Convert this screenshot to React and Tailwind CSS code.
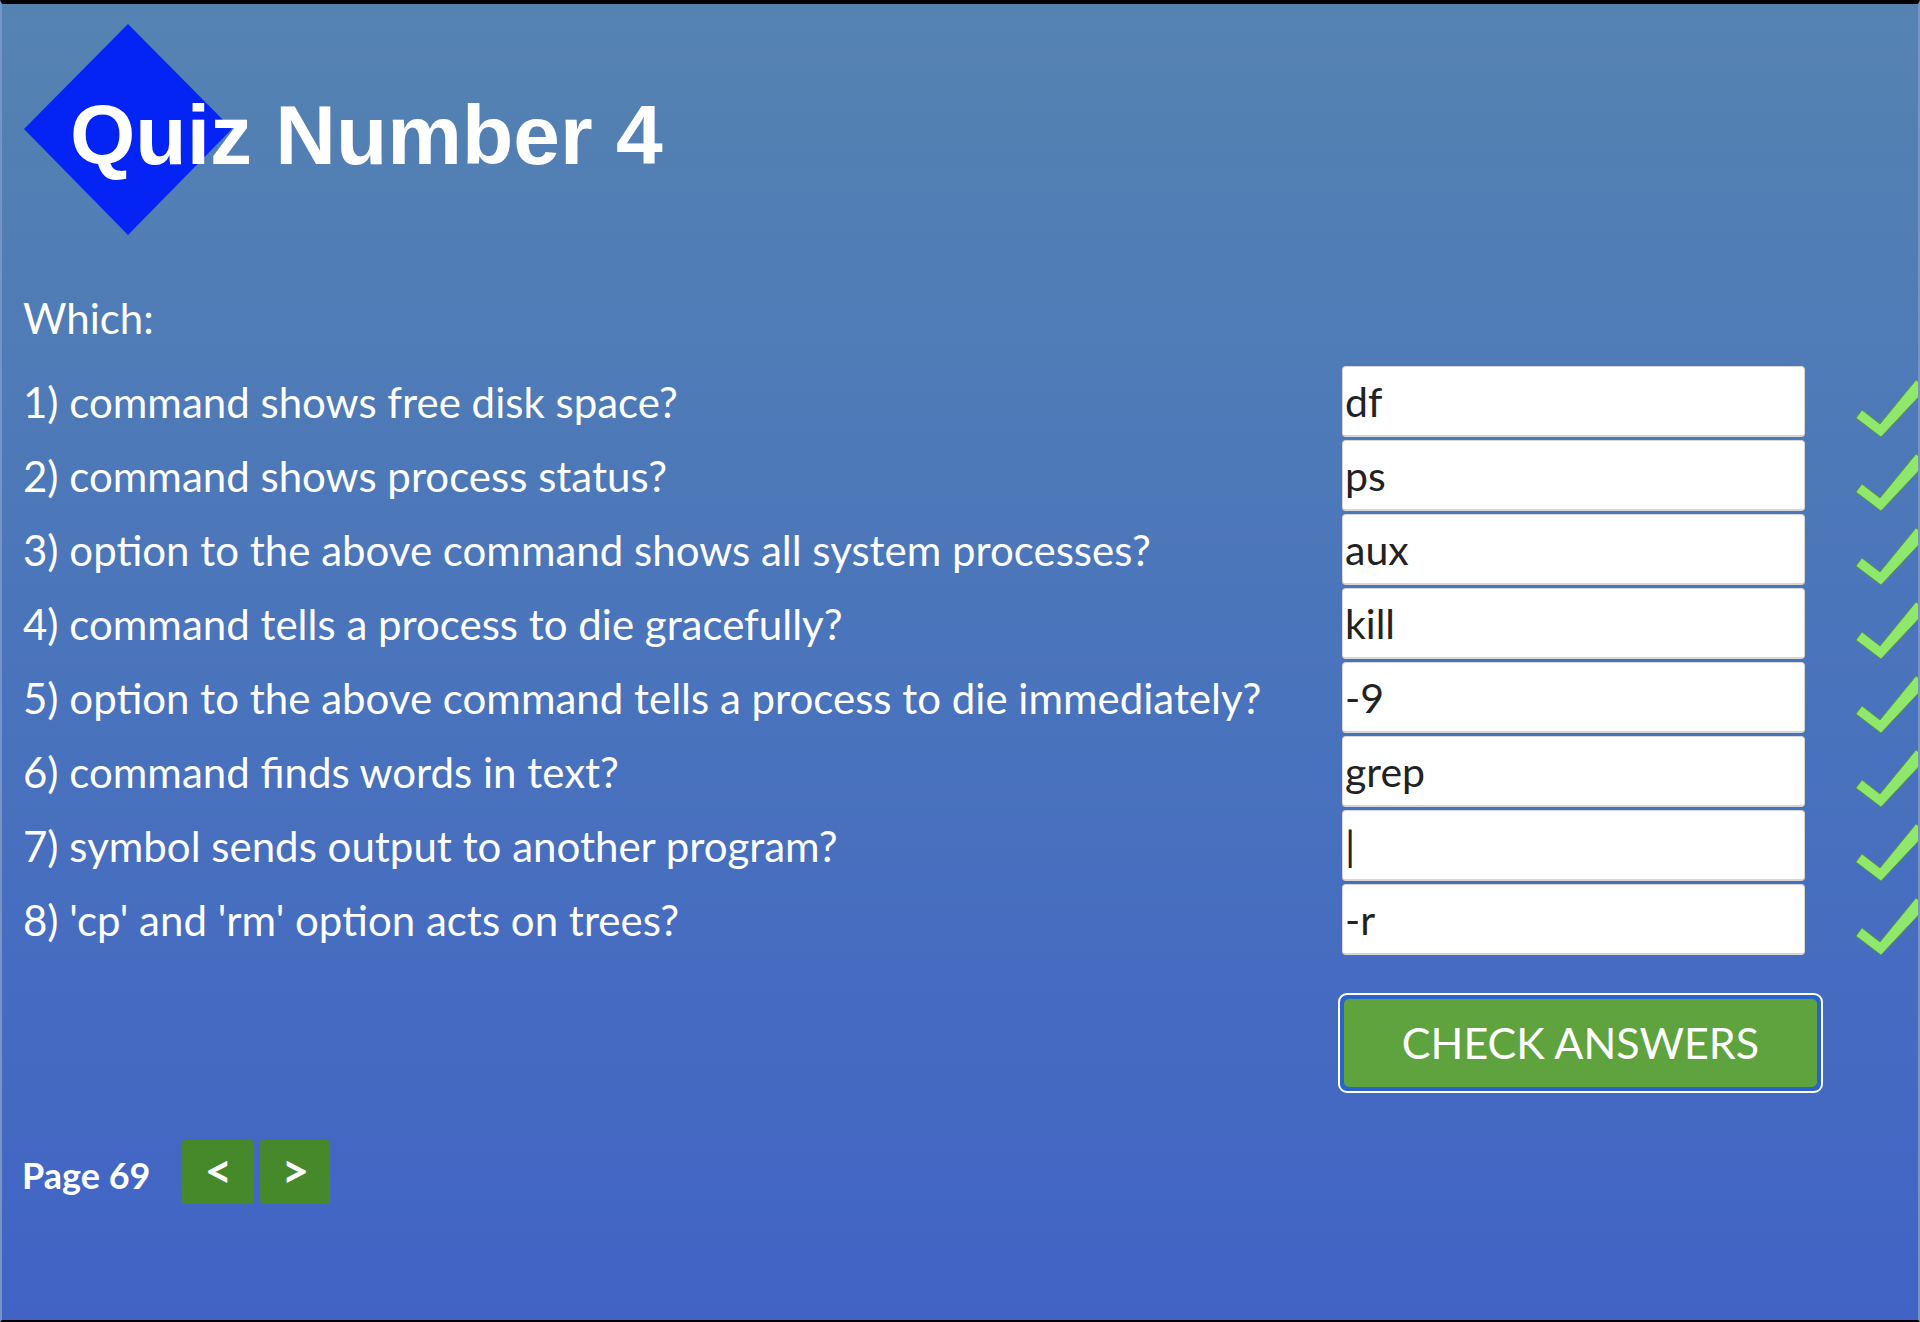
import React from "react";

const questions = [
  { q: "1) command shows free disk space?", a: "df" },
  { q: "2) command shows process status?", a: "ps" },
  { q: "3) option to the above command shows all system processes?", a: "aux" },
  { q: "4) command tells a process to die gracefully?", a: "kill" },
  { q: "5) option to the above command tells a process to die immediately?", a: "-9" },
  { q: "6) command finds words in text?", a: "grep" },
  { q: "7) symbol sends output to another program?", a: "|" },
  { q: "8) 'cp' and 'rm' option acts on trees?", a: "-r" }
];

function Tick() {
  return (
    <svg width="80" height="62" viewBox="0 0 80 62" className="ml-[45px] mb-[-1px] self-end overflow-visible">
      <polygon
        points="6,42 12,34 30,48 66,4 77,12 31,61"
        fill="#8fe86b"
        stroke="#5f9a3c"
        strokeWidth="1"
        strokeLinejoin="round"
      />
    </svg>
  );
}

export default function App() {
  return (
    <div className="h-[1322px] w-full overflow-hidden border-t-4 border-b-2 border-x-2 border-t-black border-b-black border-x-[#7794c8] bg-gradient-to-b from-[#5583b1] to-[#4163c5] font-[Lato,sans-serif] text-white">
      {/* header */}
      <div className="relative pl-[22px] pt-[20px]">
        <svg width="208" height="211" viewBox="0 0 208 211">
          <polygon points="104,0 208,105 104,211 0,105" fill="#0324f5" />
        </svg>
        <h1 className="absolute left-[68px] top-[89px] font-['Liberation_Sans',Arial,sans-serif] text-[84px] font-bold leading-none text-white">
          Quiz Number 4
        </h1>
      </div>

      <div className="pl-[21px]">
        <p className="mt-[59px] text-[42px] leading-[48px]">Which:</p>

        <div className="mt-[24px] flex flex-col gap-[3px]">
          {questions.map((item) => (
            <div key={item.q} className="grid h-[71px] grid-cols-[1319px_463px_1fr] items-center">
              <span className="text-[42px] leading-[48px]">{item.q}</span>
              <input
                readOnly
                value={item.a}
                className="h-[71px] w-[463px] rounded-[4px] border border-b-2 border-[#d6d6d6] bg-white pl-[2px] text-[41px] text-[#222] outline-none"
              />
              <Tick />
            </div>
          ))}
        </div>

        <div className="mt-[38px] grid grid-cols-[1319px_1fr]">
          <div />
          <button className="-ml-[4px] h-[100px] w-[485px] rounded-[9px] border-2 border-white bg-[#2a63c9] p-[4px]">
            <span className="flex h-full w-full items-center justify-center rounded-[5px] bg-[#5fa33e] text-[43px] text-white">
              CHECK ANSWERS
            </span>
          </button>
        </div>

        <div className="mt-[47px] flex items-center">
          <span className="-ml-[1px] mt-[6px] text-[36px] font-bold leading-[44px]">Page 69</span>
          <div className="ml-[32px] flex gap-[6px]">
            <button className="flex h-[64px] w-[72px] items-center justify-center rounded-[4px] bg-[#45892a] pb-[4px] text-[48px] font-bold leading-none text-white">
              &lt;
            </button>
            <button className="flex h-[64px] w-[70px] items-center justify-center rounded-[4px] bg-[#45892a] pb-[4px] text-[48px] font-bold leading-none text-white">
              &gt;
            </button>
          </div>
        </div>
      </div>
    </div>
  );
}
